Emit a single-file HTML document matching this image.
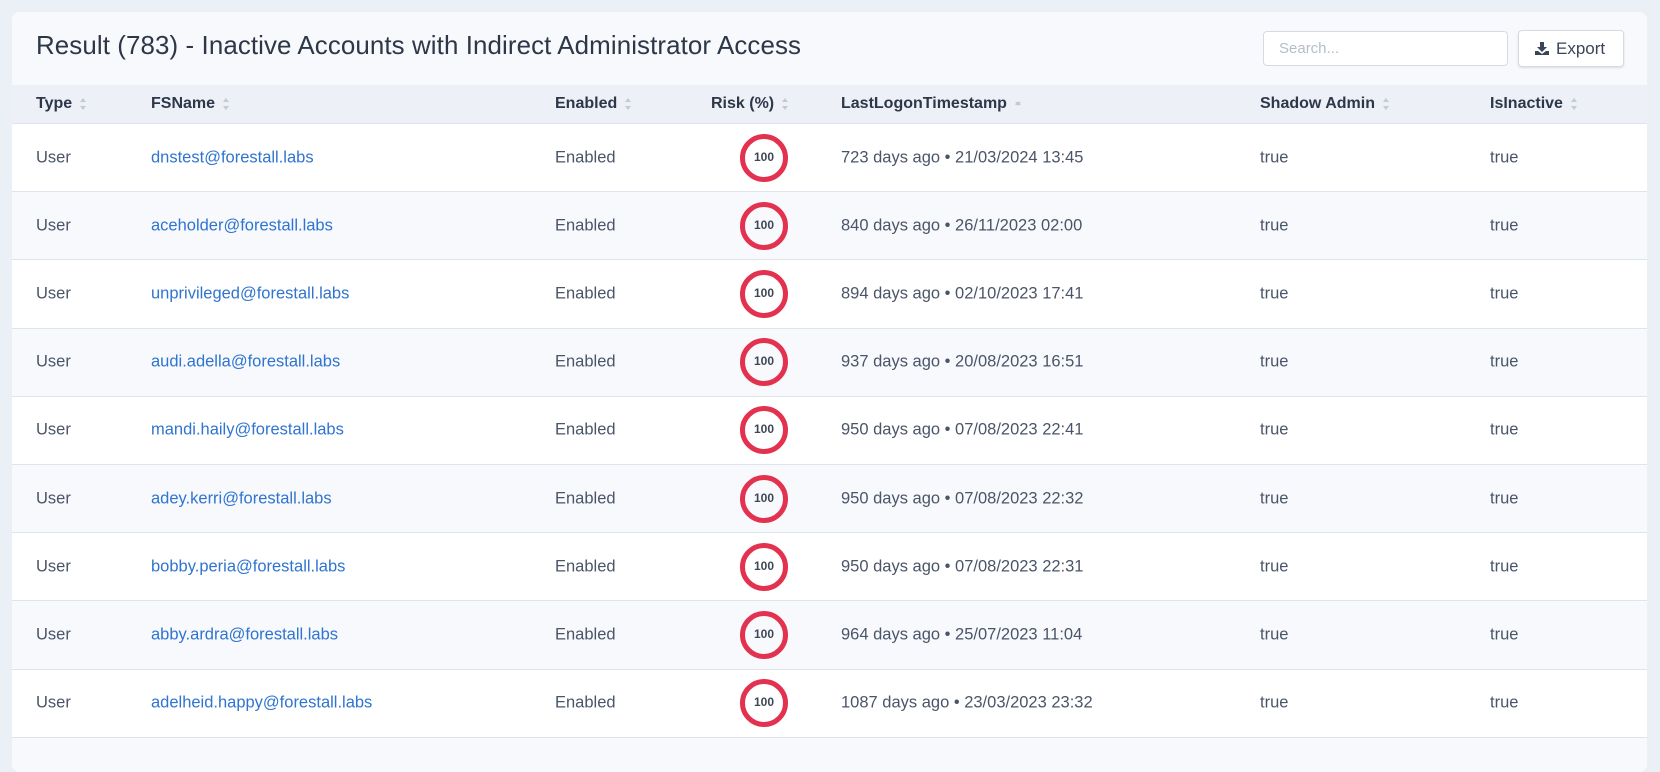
<!DOCTYPE html>
<html><head><meta charset="utf-8"><style>
*{box-sizing:border-box;margin:0;padding:0}
body{width:1660px;height:744px;background:#ebeff6;font-family:"Liberation Sans",sans-serif;overflow:hidden;position:relative}
.card{position:absolute;left:12px;top:12px;width:1635px;height:760px;background:#fff;border-radius:8px;overflow:hidden}
.top{height:73px;background:#f7f9fc;position:relative}
.title{position:absolute;left:24px;top:20px;font-size:25.9px;color:#2d3748;letter-spacing:0.1px}
.search{position:absolute;left:1251px;top:19px;width:245px;height:35px;border:1px solid #d5dbe5;border-radius:4px;background:#fff;color:#b5bdca;font-size:15px;padding:8px 15px}
.export{position:absolute;left:1506px;top:18px;width:106px;height:37px;border:1px solid #d5dbe5;border-radius:4px;background:#fff;box-shadow:0 1px 2px rgba(0,0,0,.12);color:#3a4556;font-size:17px;padding:8px 0 0 37px}
.export svg{position:absolute;left:16px;top:11px}
.head{height:38px;background:#edf1f7;position:relative;font-size:16px;color:#2d3748;font-weight:bold}
.row{height:68.2px;position:relative;border-top:1px solid #dfe4ec;font-size:16.5px;color:#4a5568}
.row.alt{background:#f7f9fc}
.c{position:absolute;top:50%;transform:translateY(-50%);white-space:nowrap}
.head .c{font-weight:600;color:#2d3748}
.s{display:inline-block;margin-left:8px;vertical-align:middle;width:7px;height:12px;position:relative}
.s:before,.s:after{content:"";position:absolute;left:0;border-left:3.5px solid transparent;border-right:3.5px solid transparent}
.s:before{top:0;border-bottom:4px solid #c3cad6}
.s:after{bottom:0;border-top:4px solid #c3cad6}
a{color:#2f74d0;text-decoration:none}
.risk{position:absolute;left:728px;top:50%;transform:translateY(-50%);width:48px;height:48px;border:5px solid #e3324f;border-radius:50%;font-size:12px;font-weight:bold;color:#3d4756;text-align:center;line-height:37px}
</style></head><body>
<div class="card">
<div class="top"><div class="title">Result (783) - Inactive Accounts with Indirect Administrator Access</div>
<div class="search">Search...</div>
<div class="export"><svg width="14" height="13" viewBox="0 0 14 13"><path d="M5 0h4v5h3L7 10 2 5h3z" fill="#3a4556"/><path d="M0 9h3l4 3 4-3h3v4H0z" fill="#3a4556"/></svg>Export</div></div>
<div class="head">
<span class="c" style="left:24px">Type<i class="s"></i></span>
<span class="c" style="left:139px">FSName<i class="s"></i></span>
<span class="c" style="left:543px">Enabled<i class="s"></i></span>
<span class="c" style="left:699px">Risk (%)<i class="s"></i></span>
<span class="c" style="left:829px">LastLogonTimestamp<i class="s" style="height:5px"></i></span>
<span class="c" style="left:1248px">Shadow Admin<i class="s"></i></span>
<span class="c" style="left:1478px">IsInactive<i class="s"></i></span>
</div>
<div class="row"><span class="c" style="left:24px">User</span><a class="c" style="left:139px">dnstest@forestall.labs</a><span class="c" style="left:543px">Enabled</span><div class="risk">100</div><span class="c" style="left:829px">723 days ago • 21/03/2024 13:45</span><span class="c" style="left:1248px">true</span><span class="c" style="left:1478px">true</span></div>
<div class="row alt"><span class="c" style="left:24px">User</span><a class="c" style="left:139px">aceholder@forestall.labs</a><span class="c" style="left:543px">Enabled</span><div class="risk">100</div><span class="c" style="left:829px">840 days ago • 26/11/2023 02:00</span><span class="c" style="left:1248px">true</span><span class="c" style="left:1478px">true</span></div>
<div class="row"><span class="c" style="left:24px">User</span><a class="c" style="left:139px">unprivileged@forestall.labs</a><span class="c" style="left:543px">Enabled</span><div class="risk">100</div><span class="c" style="left:829px">894 days ago • 02/10/2023 17:41</span><span class="c" style="left:1248px">true</span><span class="c" style="left:1478px">true</span></div>
<div class="row alt"><span class="c" style="left:24px">User</span><a class="c" style="left:139px">audi.adella@forestall.labs</a><span class="c" style="left:543px">Enabled</span><div class="risk">100</div><span class="c" style="left:829px">937 days ago • 20/08/2023 16:51</span><span class="c" style="left:1248px">true</span><span class="c" style="left:1478px">true</span></div>
<div class="row"><span class="c" style="left:24px">User</span><a class="c" style="left:139px">mandi.haily@forestall.labs</a><span class="c" style="left:543px">Enabled</span><div class="risk">100</div><span class="c" style="left:829px">950 days ago • 07/08/2023 22:41</span><span class="c" style="left:1248px">true</span><span class="c" style="left:1478px">true</span></div>
<div class="row alt"><span class="c" style="left:24px">User</span><a class="c" style="left:139px">adey.kerri@forestall.labs</a><span class="c" style="left:543px">Enabled</span><div class="risk">100</div><span class="c" style="left:829px">950 days ago • 07/08/2023 22:32</span><span class="c" style="left:1248px">true</span><span class="c" style="left:1478px">true</span></div>
<div class="row"><span class="c" style="left:24px">User</span><a class="c" style="left:139px">bobby.peria@forestall.labs</a><span class="c" style="left:543px">Enabled</span><div class="risk">100</div><span class="c" style="left:829px">950 days ago • 07/08/2023 22:31</span><span class="c" style="left:1248px">true</span><span class="c" style="left:1478px">true</span></div>
<div class="row alt"><span class="c" style="left:24px">User</span><a class="c" style="left:139px">abby.ardra@forestall.labs</a><span class="c" style="left:543px">Enabled</span><div class="risk">100</div><span class="c" style="left:829px">964 days ago • 25/07/2023 11:04</span><span class="c" style="left:1248px">true</span><span class="c" style="left:1478px">true</span></div>
<div class="row"><span class="c" style="left:24px">User</span><a class="c" style="left:139px">adelheid.happy@forestall.labs</a><span class="c" style="left:543px">Enabled</span><div class="risk">100</div><span class="c" style="left:829px">1087 days ago • 23/03/2023 23:32</span><span class="c" style="left:1248px">true</span><span class="c" style="left:1478px">true</span></div>
<div class="row alt"></div>
</div>
</body></html>
